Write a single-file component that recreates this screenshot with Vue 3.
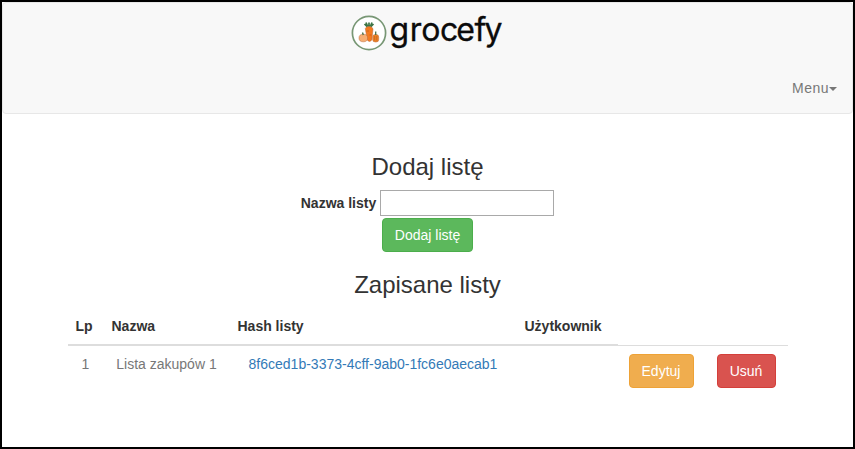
<script setup>
const heads = ['Lp', 'Nazwa', 'Hash listy', 'Użytkownik']
const rows = [{ id: 1, name: 'Lista zakupów 1', hash: '8f6ced1b-3373-4cff-9ab0-1fc6e0aecab1', user: '' }]
</script>

<template>
  <div class="page">
    <nav class="navbar">
      <svg class="logo" width="156" height="50" viewBox="0 0 156 50" role="img" aria-label="grocefy">
        <circle cx="20" cy="25" r="16.600" fill="#fff" stroke="#789775" stroke-width="1.700" />
        <path d="M20 19.500V14.500M18.500 19L15.500 16M21.500 19L24.500 16M18.500 18L17 14.500M21.500 18L23 14.500" stroke="#3c7546" stroke-width="1.700" fill="none" />
        <g stroke="#b9683a" stroke-width=".5">
          <path d="M16.300 20.500Q17 18.500 20 18.500Q23.400 18.500 24 21L22.800 32Q20.500 35 18.200 32Z" fill="#f47a20" />
          <ellipse cx="14.300" cy="30" rx="4.300" ry="3.800" fill="#f6ad72" />
          <rect x="23.700" y="26.500" width="6" height="7.500" rx="2.500" fill="#ee8428" />
        </g>
        <path d="M14.300 27L13.500 24.500M26.700 27V23.500" stroke="#477049" stroke-width="1.300" />
        <path d="M17.500 23H20M20.500 27H22.500M25.700 28V32.500M27.800 28V32.500" stroke="#b95718" stroke-width=".6" />
        <text class="wordmark" x="40.500 60.800 72.300 90.900 107.300 125.500 135.500" y="33">grocefy</text>
      </svg>
      <a class="menu">Menu<span class="caret"></span></a>
    </nav>
    <main class="container">
      <h3>Dodaj listę</h3>
      <form class="form" @submit.prevent>
        <div class="field">
          <label for="list-name">Nazwa listy</label>
          <input id="list-name" type="text" />
        </div>
        <button class="btn success">Dodaj listę</button>
      </form>
      <h3>Zapisane listy</h3>
      <div class="table">
        <div v-for="h in heads" :key="h" class="th">{{ h }}</div>
        <div class="th empty"></div>
        <div class="th empty"></div>
        <template v-for="r in rows" :key="r.id">
          <div class="td">{{ r.id }}</div>
          <div class="td">{{ r.name }}</div>
          <div class="td"><a class="hash">{{ r.hash }}</a></div>
          <div class="td">{{ r.user }}</div>
          <div class="td"><button class="btn warning">Edytuj</button></div>
          <div class="td"><button class="btn danger">Usuń</button></div>
        </template>
      </div>
    </main>
  </div>
</template>

<style>
body { margin: 0; background: #fff; }
</style>

<style scoped>
* { box-sizing: border-box; }
.page {
  height: 449px;
  border: 2px solid #000;
  background: #fff;
  color: #333;
  font: 14px/20px "Liberation Sans", Arial, sans-serif;
}
.navbar {
  height: 112px;
  border: 1px solid #e7e7e7;
  border-radius: 4px;
  background: #f8f8f8;
  display: flex;
  flex-direction: column;
  align-items: center;
  padding: 5px 15px 0;
}
.logo { display: block; flex: none; margin-right: 1px; overflow: visible; }
.wordmark {
  font-family: Inter, sans-serif;
  font-size: 32px;
  fill: #0b0b0b;
  stroke: #0b0b0b;
  stroke-width: .3px;
  stroke-linejoin: round;
}
.menu {
  align-self: flex-end;
  display: flex;
  align-items: center;
  margin-top: 20px;
  color: #777;
  letter-spacing: .5px;
}
.caret {
  border-top: 4px solid #777;
  border-left: 4px solid transparent;
  border-right: 4px solid transparent;
  margin-top: 1px;
}
.container {
  width: 720px;
  margin: 0 auto;
  padding-top: 40px;
  text-align: center;
}
h3 { margin: 0 0 10px; font-size: 24px; line-height: 26px; font-weight: 400; }
.form { display: flex; flex-direction: column; align-items: center; gap: 2px; margin-bottom: 20px; }
.field { display: flex; align-items: center; gap: 4px; }
label { font-weight: 700; }
input { width: 174px; height: 26px; border: 1px solid #a9a9a9; background: #fff; padding: 2px; }
.btn {
  font: inherit;
  height: 34px;
  padding: 6px 12px;
  border: 1px solid;
  border-radius: 4px;
  color: #fff;
}
.success { background: #5cb85c; border-color: #4cae4c; }
.warning { width: 65px; background: #f0ad4e; border-color: #eea236; }
.danger { width: 59px; background: #d9534f; border-color: #d43f3a; }
.table { display: grid; grid-template-columns: 36px 126px 287px 101px 87px 83px; }
.th {
  height: 38px;
  padding: 8px;
  border-bottom: 2px solid #ddd;
  font-weight: 700;
  text-align: left;
}
.th.empty { border-bottom-width: 1px; }
.td { padding: 8px 0; color: #777; }
.hash { color: #337ab7; }
</style>
